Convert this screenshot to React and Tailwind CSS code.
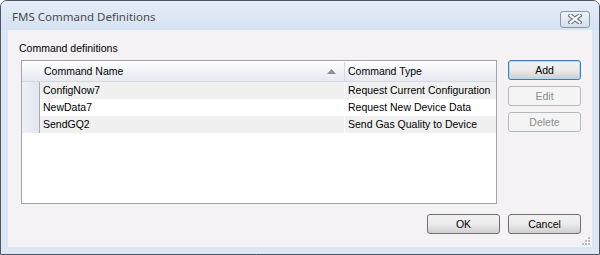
import React from "react";

const rows = [
  { name: "ConfigNow7", type: "Request Current Configuration" },
  { name: "NewData7", type: "Request New Device Data" },
  { name: "SendGQ2", type: "Send Gas Quality to Device" },
];

// plain winforms style push button
const Button = ({ children, primary, disabled }) => {
  let cls = "w-[73px] h-[20px] rounded-[3px] border flex items-center justify-center text-[10.5px] pt-[1px] ";
  if (disabled) cls += "border-[#b5b9bd] bg-[#f4f4f4] text-[#8d8d8d]";
  else if (primary) cls += "border-[#3c7fb1] bg-gradient-to-b from-[#f2f2f2] via-[#ebebeb] to-[#cfcfcf] text-black shadow-[inset_0_0_0_1px_#a8dcf5]";
  else cls += "border-[#707070] bg-gradient-to-b from-[#f2f2f2] via-[#ebebeb] to-[#cfcfcf] text-black";
  return <div className={cls}>{children}</div>;
};

const CloseIcon = () => (
  <svg width="14" height="10" viewBox="0 0 14 10">
    <path d="M2.5 1.5 L11.5 8.5 M11.5 1.5 L2.5 8.5" stroke="#6f7888" strokeWidth="4.5" strokeLinecap="square" />
    <path d="M2.5 1.5 L11.5 8.5 M11.5 1.5 L2.5 8.5" stroke="#ffffff" strokeWidth="2.2" strokeLinecap="square" />
  </svg>
);

export default function App() {
  return (
    <div
      className="w-[600px] h-[255px] bg-[#dbe7f5] border border-[#4d5563] rounded-t-[7px] flex flex-col overflow-hidden"
      style={{ fontFamily: '"Liberation Sans", Arial, sans-serif' }}
    >
      {/* title bar */}
      <div className="h-[29px] flex items-center justify-between pl-[11px] pr-[9px] bg-gradient-to-b from-[#e4edf8] to-[#d6e3f3]">
        <span className="text-[11.5px] text-[#4a4a4a] mt-[3px]" style={{ fontFamily: '"Noto Sans", sans-serif' }}>
          FMS Command Definitions
        </span>
        <div className="w-[30px] h-[17px] mt-[7px] rounded-[3px] border border-[#8b95a6] bg-gradient-to-b from-[#eef3fa] to-[#d4dfee] flex items-center justify-center">
          <CloseIcon />
        </div>
      </div>

      {/* client area */}
      <div className="mx-[7px] h-[217px] bg-[#f5f2f5] relative flex flex-col">
        <div className="pl-[11px] pt-[12px] text-[10.5px] text-black leading-[13px]">Command definitions</div>
        <div className="flex mt-[5px] pl-[13px] gap-[11px]">
          <div className="w-[476px] h-[144px] border border-[#a3a3a3] bg-white">
            <div className="flex h-[21px] bg-gradient-to-b from-[#ffffff] to-[#e6e9f0] border-b border-[#d5d8de] text-[10.5px] pt-[1px]">
              <div className="w-[323px] flex items-center justify-between pl-[22px] pr-[8px] border-r border-[#d5d8e0]">
                <span>Command Name</span>
                <svg width="9" height="5" viewBox="0 0 9 5">
                  <path d="M0 5 L4.5 0 L9 5 Z" fill="#8e8e8e" />
                </svg>
              </div>
              <div className="flex-1 flex items-center pl-[3px]">Command Type</div>
            </div>
            {rows.map((r, i) => (
              <div key={r.name} className={"flex h-[17px] text-[10.5px] " + (i % 2 === 0 ? "bg-[#f0f0f0]" : "bg-white")}>
                <div className="w-[18px] bg-gradient-to-r from-[#eef0f4] to-[#e2e6ee] border-r border-[#a9adb5]"></div>
                <div className="w-[305px] flex items-center pl-[3px] pt-[1px] border-r border-white">{r.name}</div>
                <div className="w-[151px] flex items-center pl-[3px] pt-[1px]">{r.type}</div>
              </div>
            ))}
          </div>
          <div className="flex flex-col gap-[6px]">
            <Button primary>Add</Button>
            <Button disabled>Edit</Button>
            <Button disabled>Delete</Button>
          </div>
        </div>
        <div className="flex justify-end gap-[8px] pr-[11px] mt-[10px]">
          <Button>OK</Button>
          <Button>Cancel</Button>
        </div>
        {/* size grip */}
        <svg className="absolute right-[2px] bottom-[2px]" width="8" height="8" viewBox="0 0 8 8">
          {[[6, 0], [6, 3], [3, 3], [6, 6], [3, 6], [0, 6]].map(([x, y]) => (
            <rect key={x + "-" + y} x={x} y={y} width="2" height="2" fill="#b8bcc4" />
          ))}
        </svg>
      </div>
    </div>
  );
}
